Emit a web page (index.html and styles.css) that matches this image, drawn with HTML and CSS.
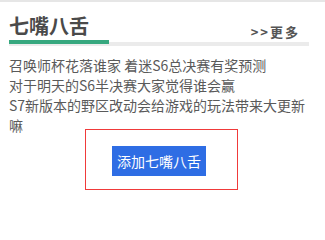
FILE: index.html
```html
<!DOCTYPE html>
<html lang="zh-CN">
<head>
<meta charset="utf-8">
<title>七嘴八舌</title>
<link rel="stylesheet" href="styles.css">
</head>
<body>
<div class="topbar"></div>
<div class="panel">
  <div class="head">
    <h2 class="title">七嘴八舌</h2>
    <a class="more" href="#">&gt;&gt;更多</a>
  </div>
  <ul class="list">
    <li>召唤师杯花落谁家 着迷S6总决赛有奖预测</li>
    <li>对于明天的S6半决赛大家觉得谁会赢</li>
    <li>S7新版本的野区改动会给游戏的玩法带来大更新嘛</li>
  </ul>
  <div class="addbox">
    <a class="addbtn" href="#">添加七嘴八舌</a>
  </div>
</div>
</body>
</html>
```
FILE: styles.css
```css
html, body {
  margin: 0;
  padding: 0;
  background: #fff;
  font-family: "Noto Sans CJK SC", "Noto Sans", sans-serif;
  color: #555;
}
.topbar {
  height: 2px;
  background: #e6e6e6;
}
.panel {
  width: 300px;
  margin-left: 9px;
}
.head {
  display: flex;
  justify-content: space-between;
  align-items: flex-end;
  padding-top: 12px;
  border-bottom: 4px solid #ebebeb;
}
.title {
  margin: 0 0 -2px 0;
  width: 100px;
  font-size: 20px;
  line-height: 24px;
  font-weight: bold;
  color: #4a4a4a;
  padding-bottom: 2px;
  border-bottom: 4px solid #37a87f;
}
.more {
  margin: 0 9px 2px 0;
  font-size: 13px;
  line-height: 16px;
  font-weight: bold;
  letter-spacing: 2px;
  color: #555;
  text-decoration: none;
}
.list {
  list-style: none;
  margin: 0;
  padding: 9px 0 0 0;
  font-size: 14px;
  line-height: 20px;
  color: #5a5a5a;
}
.addbox {
  width: 125px;
  height: 43px;
  margin: -6px 0 0 76px;
  padding: 16px 0 0 26px;
  border-style: solid;
  border-width: 1px;
  border-color: rgb(240, 58, 58);
}
.addbtn {
  display: block;
  width: 84px;
  height: 30px;
  padding: 0 5px;
  background: #2e6de4;
  color: #fff;
  font-size: 14px;
  line-height: 30px;
  text-decoration: none;
}
```
